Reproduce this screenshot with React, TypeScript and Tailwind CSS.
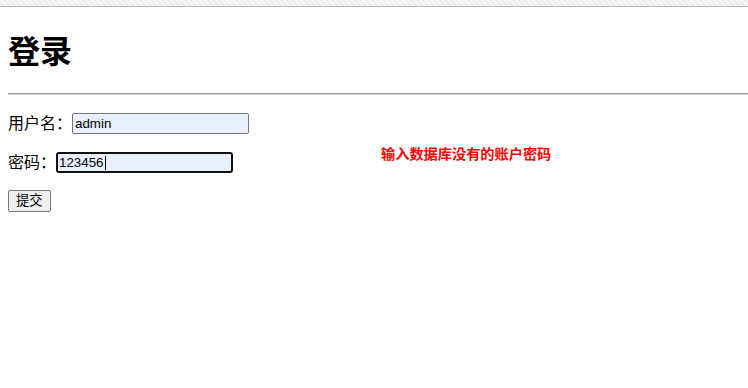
export default function App() {
  return (
    <div className="min-h-screen bg-white text-black font-['Liberation_Sans','Noto_Sans_CJK_SC',sans-serif]">
      <div className="h-[7px] border-b border-[#b9b9b9] bg-[repeating-linear-gradient(45deg,#f7f7f7_0px,#f7f7f7_2px,#ececec_2px,#ececec_4px)]" />
      <div className="pl-2">
        <h1 className="pt-[27px] pb-[22px] text-[32px] leading-[37px] font-bold">登录</h1>
        <div className="h-[2px] border-t border-[#9a9a9a] bg-[#d6d6d6]" />

        <div className="mt-[18px] flex items-center text-[16px] leading-[21px]">
          <span>用户名：</span>
          <input
            defaultValue="admin"
            readOnly
            className="h-[21px] w-[177px] rounded-[2px] border border-[#767676] bg-[#e8f0fe] px-[2px] text-[13.33px] outline-none"
          />
        </div>

        <div className="mt-[18px] flex items-center text-[16px] leading-[21px]">
          <span>密码：</span>
          <div className="flex h-[21px] w-[177px] items-center rounded-[3px] border-2 border-[#101010] bg-[#e8f0fe] px-[1px] text-[13.33px]">
            123456
            <span className="ml-[1px] h-[14px] w-px bg-black" />
          </div>
          <span className="ml-[148px] -mt-[8px] self-start text-[14.2px] leading-[20px] font-bold text-[#ff0000]">
            输入数据库没有的账户密码
          </span>
        </div>

        <button className="mt-[17px] h-[22px] rounded-[2px] border border-[#767676] bg-[#efefef] px-[7px] text-[13.33px] leading-[18px]">
          提交
        </button>
      </div>
    </div>
  )
}
